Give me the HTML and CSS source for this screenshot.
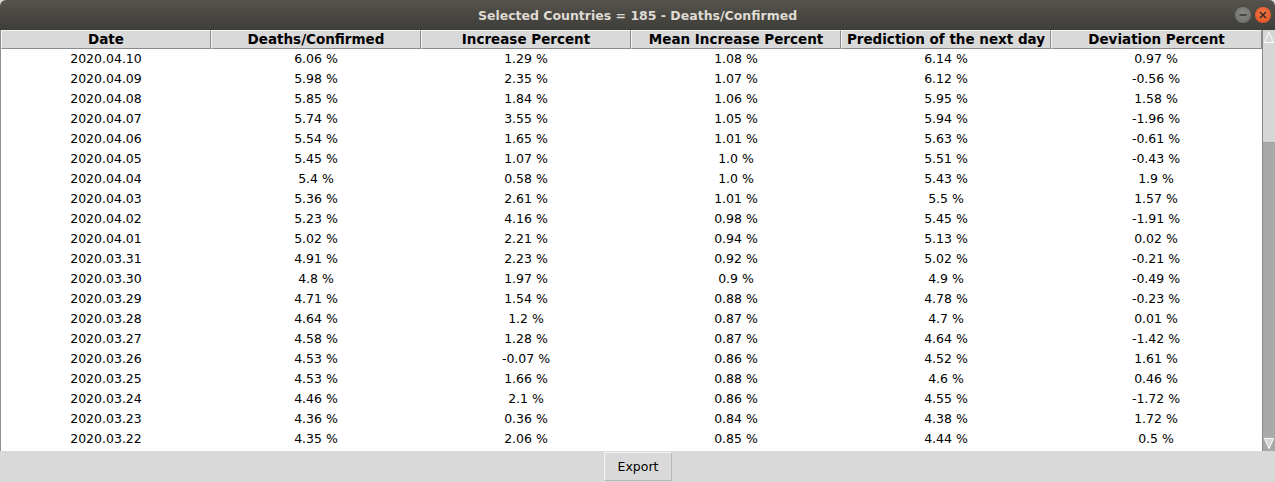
FILE: index.html
```html
<!DOCTYPE html>
<html>
<head>
<meta charset="utf-8">
<link rel="stylesheet" href="styles.css">
</head>
<body>
<div class="window">
  <div class="titlebar">
    <span class="title">Selected Countries = 185 - Deaths/Confirmed</span>
    <div class="wbtns">
      <span class="wbtn min"><svg width="16" height="16" viewBox="0 0 16 16"><line x1="4.5" y1="8" x2="11.5" y2="8" stroke="#3a3a37" stroke-width="1.6"/></svg></span>
      <span class="wbtn close"><svg width="16" height="16" viewBox="0 0 16 16"><path d="M5 5 L11 11 M11 5 L5 11" stroke="#3a2a20" stroke-width="1.6"/></svg></span>
    </div>
  </div>
  <div class="main">
    <div class="table">
      <div class="thead">
        <div class="th">Date</div>
        <div class="th">Deaths/Confirmed</div>
        <div class="th">Increase Percent</div>
        <div class="th">Mean Increase Percent</div>
        <div class="th">Prediction of the next day</div>
        <div class="th">Deviation Percent</div>
      </div>
      <div class="tbody">
        <div class="tr"><span>2020.04.10</span><span>6.06 %</span><span>1.29 %</span><span>1.08 %</span><span>6.14 %</span><span>0.97 %</span></div>
        <div class="tr"><span>2020.04.09</span><span>5.98 %</span><span>2.35 %</span><span>1.07 %</span><span>6.12 %</span><span>-0.56 %</span></div>
        <div class="tr"><span>2020.04.08</span><span>5.85 %</span><span>1.84 %</span><span>1.06 %</span><span>5.95 %</span><span>1.58 %</span></div>
        <div class="tr"><span>2020.04.07</span><span>5.74 %</span><span>3.55 %</span><span>1.05 %</span><span>5.94 %</span><span>-1.96 %</span></div>
        <div class="tr"><span>2020.04.06</span><span>5.54 %</span><span>1.65 %</span><span>1.01 %</span><span>5.63 %</span><span>-0.61 %</span></div>
        <div class="tr"><span>2020.04.05</span><span>5.45 %</span><span>1.07 %</span><span>1.0 %</span><span>5.51 %</span><span>-0.43 %</span></div>
        <div class="tr"><span>2020.04.04</span><span>5.4 %</span><span>0.58 %</span><span>1.0 %</span><span>5.43 %</span><span>1.9 %</span></div>
        <div class="tr"><span>2020.04.03</span><span>5.36 %</span><span>2.61 %</span><span>1.01 %</span><span>5.5 %</span><span>1.57 %</span></div>
        <div class="tr"><span>2020.04.02</span><span>5.23 %</span><span>4.16 %</span><span>0.98 %</span><span>5.45 %</span><span>-1.91 %</span></div>
        <div class="tr"><span>2020.04.01</span><span>5.02 %</span><span>2.21 %</span><span>0.94 %</span><span>5.13 %</span><span>0.02 %</span></div>
        <div class="tr"><span>2020.03.31</span><span>4.91 %</span><span>2.23 %</span><span>0.92 %</span><span>5.02 %</span><span>-0.21 %</span></div>
        <div class="tr"><span>2020.03.30</span><span>4.8 %</span><span>1.97 %</span><span>0.9 %</span><span>4.9 %</span><span>-0.49 %</span></div>
        <div class="tr"><span>2020.03.29</span><span>4.71 %</span><span>1.54 %</span><span>0.88 %</span><span>4.78 %</span><span>-0.23 %</span></div>
        <div class="tr"><span>2020.03.28</span><span>4.64 %</span><span>1.2 %</span><span>0.87 %</span><span>4.7 %</span><span>0.01 %</span></div>
        <div class="tr"><span>2020.03.27</span><span>4.58 %</span><span>1.28 %</span><span>0.87 %</span><span>4.64 %</span><span>-1.42 %</span></div>
        <div class="tr"><span>2020.03.26</span><span>4.53 %</span><span>-0.07 %</span><span>0.86 %</span><span>4.52 %</span><span>1.61 %</span></div>
        <div class="tr"><span>2020.03.25</span><span>4.53 %</span><span>1.66 %</span><span>0.88 %</span><span>4.6 %</span><span>0.46 %</span></div>
        <div class="tr"><span>2020.03.24</span><span>4.46 %</span><span>2.1 %</span><span>0.86 %</span><span>4.55 %</span><span>-1.72 %</span></div>
        <div class="tr"><span>2020.03.23</span><span>4.36 %</span><span>0.36 %</span><span>0.84 %</span><span>4.38 %</span><span>1.72 %</span></div>
        <div class="tr"><span>2020.03.22</span><span>4.35 %</span><span>2.06 %</span><span>0.85 %</span><span>4.44 %</span><span>0.5 %</span></div>
      </div>
    </div>
    <div class="scrollbar">
      <div class="sbtn up"><svg width="13" height="15" viewBox="0 0 13 15"><path d="M1.5 13 L6.5 2 L11.5 13 Z" fill="#d6d6d6" stroke="#ffffff" stroke-width="1"/></svg></div>
      <div class="track"><div class="thumb"></div></div>
      <div class="sbtn down"><svg width="13" height="15" viewBox="0 0 13 15"><path d="M1.5 2 L6.5 13 L11.5 2 Z" fill="#d6d6d6" stroke="#ffffff" stroke-width="1"/></svg></div>
    </div>
  </div>
  <div class="footer">
    <button class="btn">Export</button>
  </div>
</div>
</body>
</html>
```
FILE: styles.css
```css
* { box-sizing: border-box; }
html, body { margin: 0; padding: 0; background: #d9d9d9; }
body { width: 1275px; height: 482px; overflow: hidden; font-family: "DejaVu Sans", sans-serif; }
.window { display: flex; flex-direction: column; height: 482px; }
.titlebar {
  height: 30px; flex: none;
  background: linear-gradient(#56534d, #3e3d39);
  border-radius: 6px 6px 0 0;
  display: flex; align-items: center; justify-content: center;
  position: relative;
}
.title { color: #dfdbd2; font-weight: bold; font-size: 12.5px; padding-top: 1px; }
.wbtns { position: absolute; right: 4px; top: 7px; display: flex; gap: 4px; }
.wbtn { width: 16px; height: 16px; border-radius: 50%; display: flex; align-items: center; justify-content: center; }
.wbtn.min { background: radial-gradient(circle at 50% 40%, #8a8a85, #6a6965); }
.wbtn.close { background: radial-gradient(circle at 50% 40%, #f27a4e, #df4a17); }
.main { display: flex; height: 421px; flex: none; background: #ffffff; }
.table { width: 1262px; border-left: 1px solid #8f8f8f; display: flex; flex-direction: column; background: #fff; }
.thead { display: flex; height: 19px; flex: none; }
.th {
  width: 210px; height: 19px; flex: none;
  background: #d9d9d9;
  border-top: 1px solid #f2f2f2; border-left: 1px solid #f2f2f2;
  border-right: 1px solid #8a8a8a; border-bottom: 1px solid #8a8a8a;
  font-weight: bold; font-size: 13.5px; color: #000;
  display: flex; align-items: center; justify-content: center; line-height: 17px;
}
.th:last-child { width: 211px; }
.tbody { display: flex; flex-direction: column; }
.tr { display: flex; height: 20px; }
.tr span { width: 210px; flex: none; text-align: center; font-size: 12.5px; line-height: 20px; color: #000; }
.scrollbar { width: 13px; flex: none; border-left: 1px solid #8a8a8a; display: flex; flex-direction: column; background: #a9a9a9; }
.sbtn { height: 15px; flex: none; background: #d6d6d6; display: flex; }
.sbtn.down { background: #a9a9a9; }
.track { flex: 1; }
.thumb { height: 98px; background: #d6d6d6; border-bottom: 1px solid #a0a0a0; }
.footer { flex: 1; display: flex; justify-content: center; align-items: flex-start; padding-top: 1px; }
.btn {
  width: 68px; height: 29px; margin-left: 1px;
  background: #d9d9d9; border: 1px solid #f4f4f4; border-right-color: #b8b8b8; border-bottom-color: #b8b8b8;
  font-family: "DejaVu Sans", sans-serif; font-size: 12.5px; color: #000; padding: 0;
}
```
